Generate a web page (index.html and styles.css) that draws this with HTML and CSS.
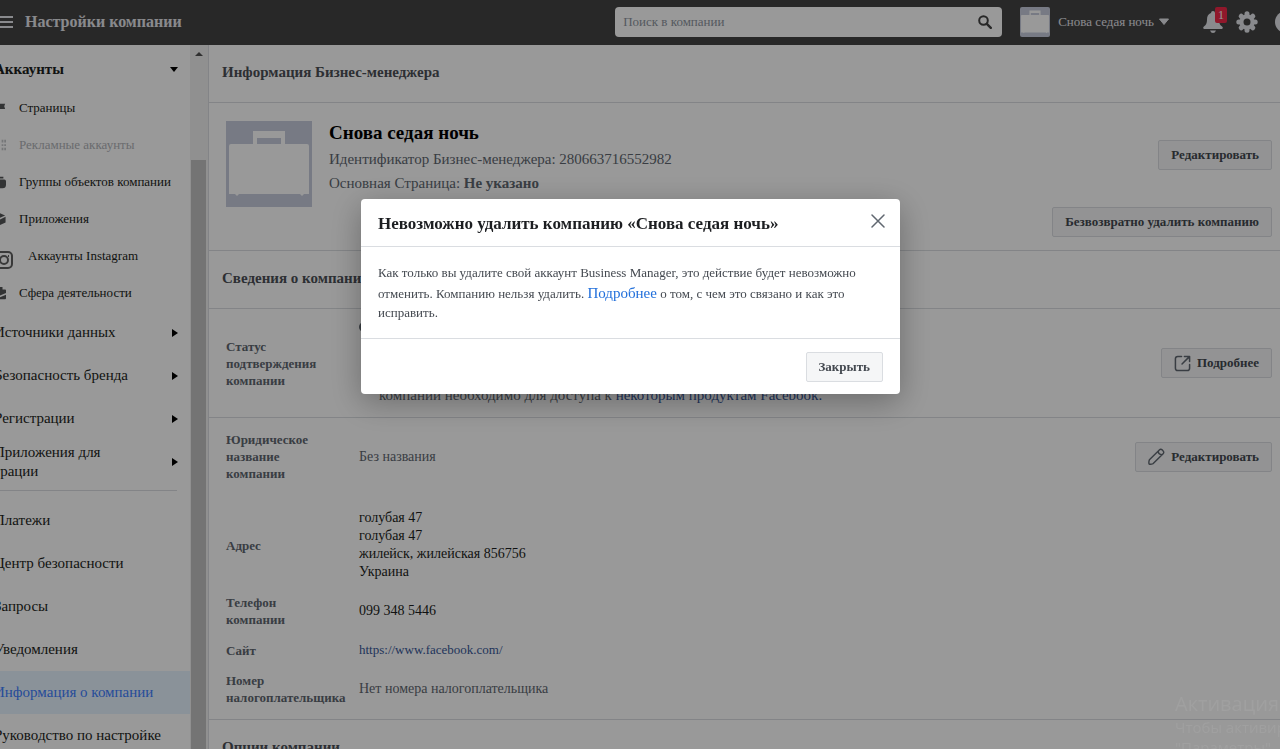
FILE: index.html
```html
<!DOCTYPE html>
<html lang="ru">
<head>
  <meta charset="UTF-8">
  <title>Настройки компании</title>
  <link rel="stylesheet" href="styles.css">
</head>
<body>
  <svg class="defs" width="0" height="0" aria-hidden="true">
    <symbol id="case" viewBox="0 0 86 86">
      <rect width="86" height="86" fill="#c6ccdc"/>
      <path d="M27 10h32v13h22q2 0 2 2v48h-5l-2 2-2-2H13l-2 2-2-2H3V25q0-2 2-2h22zM31 17v6h24v-6z" fill="#fff" fill-rule="evenodd"/>
    </symbol>
  </svg>

  <header class="topbar">
    <button class="menu" aria-label="Меню"><span></span><span></span><span></span></button>
    <h1>Настройки компании</h1>
    <form class="search">
      <input type="search" aria-label="Поиск в компании" placeholder="Поиск в компании">
      <button type="button" aria-label="Найти">
        <svg width="14" height="14" viewBox="0 0 14 14"><circle cx="5.5" cy="5.5" r="4.3" fill="none" stroke="#444" stroke-width="2"/><path d="M8.8 8.8l4 4" stroke="#444" stroke-width="2.4" stroke-linecap="round"/></svg>
      </button>
    </form>
    <button class="account">
      <svg class="avatar-small" width="30" height="30"><use href="#case"/></svg>
      Снова седая ночь
      <svg width="12" height="8" viewBox="0 0 12 8"><path d="M1.500 1h9L6 6.500z" fill="#e4e6eb" stroke="#e4e6eb" stroke-linejoin="round"/></svg>
    </button>
    <button class="bell" aria-label="Уведомления">
      <svg width="20" height="22" viewBox="0 0 20 22" fill="#e4e6eb"><path d="M10 0a2 2 0 0 1 2 2c3 1 4 3.500 4 6.500 0 4 1 5.500 3.300 7.200.9.800.5 2.300-.8 2.300H1.500c-1.300 0-1.700-1.500-.8-2.300C3 14 4 12.500 4 8.500 4 5.500 5 3 8 2a2 2 0 0 1 2-2z"/><path d="M7 19.500h6q-1 2.500-3 2.500t-3-2.500z"/></svg>
      <span class="badge">1</span>
    </button>
    <button class="gear" aria-label="Настройки">
      <svg width="22" height="22" viewBox="0 0 22 22"><g stroke="#e4e6eb" stroke-width="5" stroke-linecap="round"><path d="M11 2.800v16.400M2.800 11h16.400M5.200 5.200l11.600 11.600M16.800 5.200L5.200 16.800"/></g><circle cx="11" cy="11" r="7.500" fill="#e4e6eb"/><circle cx="11" cy="11" r="3.500" fill="#444"/></svg>
    </button>
    <button class="help" aria-label="Справка"></button>
  </header>

  <div class="layout">
    <aside class="sidebar">
      <nav class="nav">
        <a class="group open" href="#">Аккаунты <i class="arrow-down"></i></a>
        <a class="sub" href="#"><svg class="icon" viewBox="0 0 16 16"><path d="M1 1h2v14H1zM3 3h12l-1 3 1 3H3z"/></svg>Страницы</a>
        <a class="sub disabled" href="#"><svg class="icon" viewBox="0 0 16 16"><path d="M0 2h9v12H0zM11 2h2v3h-2zM14 2h2v3h-2zM11 7h2v2h-2zM14 7h2v2h-2zM11 11h2v3h-2zM14 11h2v3h-2z"/></svg>Рекламные аккаунты</a>
        <a class="sub" href="#"><svg class="icon" viewBox="0 0 16 16"><path d="M3 2h10v2H3zM0 7q0-2 2-2h12q2 0 2 2v4q0 4-4 4H4q-4 0-4-4z"/></svg>Группы объектов компании</a>
        <a class="sub" href="#"><svg class="icon" viewBox="0 0 16 16"><path d="M8 1l7 3-7 3-7-3zM1 5.500l6 3V15l-6-3zM15.500 5.500V12L9 15V8.500z"/></svg>Приложения</a>
        <a class="sub insta" href="#"><svg class="icon-insta" viewBox="0 0 18 18" fill="none" stroke="#606060" stroke-width="2"><rect x="1" y="1" width="16" height="16" rx="4"/><circle cx="9" cy="9" r="4"/><path d="M13 5h1"/></svg><span>Аккаунты Instagram</span></a>
        <a class="sub" href="#"><svg class="icon" viewBox="0 0 16 16"><path d="M5 1h7v3h3q1 0 1 1v3l-7 3-9-3V5q0-1 1-1h4zM0 10l9 3 7-3v4q0 1-1 1H1q-1 0-1-1z"/></svg>Сфера деятельности</a>
        <a class="group" href="#">Источники данных <i class="arrow-right"></i></a>
        <a class="group" href="#">Безопасность бренда <i class="arrow-right"></i></a>
        <a class="group" href="#">Регистрации <i class="arrow-right"></i></a>
        <a class="group" href="#"><span>Приложения для<br>грации</span> <i class="arrow-right"></i></a>
        <hr>
        <a class="group" href="#">Платежи</a>
        <a class="group" href="#">Центр безопасности</a>
        <a class="group" href="#">Запросы</a>
        <a class="group" href="#">Уведомления</a>
        <a class="group active" href="#">Информация о компании</a>
        <a class="group" href="#">Руководство по настройке</a>
      </nav>
      <div class="scrollbar"><i class="scroll-up"></i><div class="thumb"></div></div>
    </aside>

    <main class="content">
      <h2 class="section-title">Информация Бизнес-менеджера</h2>
      <section class="profile">
        <svg class="avatar" width="86" height="86"><use href="#case"/></svg>
        <div class="profile-info">
          <h3>Снова седая ночь</h3>
          <p>Идентификатор Бизнес-менеджера: 280663716552982</p>
          <p>Основная Страница: <b>Не указано</b></p>
        </div>
        <div class="profile-actions">
          <button class="btn">Редактировать</button>
          <button class="btn">Безвозвратно удалить компанию</button>
        </div>
      </section>

      <h2 class="section-title">Сведения о компании</h2>
      <section class="row status">
        <h4>Статус подтверждения компании</h4>
        <div class="status-text">
          <i class="dot"></i>
          <p>компании необходимо для доступа к <a href="#">некоторым продуктам Facebook.</a></p>
        </div>
        <button class="btn"><svg width="17" height="17" viewBox="0 0 18 18" fill="none" stroke="#606770" stroke-width="1.600" stroke-linecap="round" stroke-linejoin="round"><path d="M8 1.500H4Q1.500 1.500 1.500 4v10q0 2.500 2.500 2.500h10q2.500 0 2.500-2.500v-4M11 1.500h5.500V7M16 2L8.500 9.500"/></svg>Подробнее</button>
      </section>
      <section class="details">
        <div class="row legal">
          <h4>Юридическое название компании</h4>
          <p class="muted">Без названия</p>
          <button class="btn"><svg width="17" height="17" viewBox="0 0 18 18" fill="none" stroke="#606770" stroke-width="1.500" stroke-linejoin="round"><path d="M1.500 12.500L12 2q1.500-1.500 3.200.2l.6.600q1.700 1.700.2 3.200L5.500 16.500Q3 17.500 1.200 17q-.7-2 .3-4.500zM11 3.200q-.5 3.300 3.800 4"/></svg>Редактировать</button>
        </div>
        <div class="row">
          <h4>Адрес</h4>
          <p>голубая 47<br>голубая 47<br>жилейск, жилейская 856756<br>Украина</p>
        </div>
        <div class="row">
          <h4>Телефон компании</h4>
          <p>099 348 5446</p>
        </div>
        <div class="row">
          <h4>Сайт</h4>
          <p><a class="site" href="#">https://www.facebook.com/</a></p>
        </div>
        <div class="row">
          <h4>Номер налогоплательщика</h4>
          <p class="muted">Нет номера налогоплательщика</p>
        </div>
      </section>
      <h2 class="section-title">Опции компании</h2>
    </main>
  </div>

  <div class="overlay">
    <div class="modal" role="dialog" aria-labelledby="modal-title">
      <div class="modal-header">
        <h2 id="modal-title">Невозможно удалить компанию «Снова седая ночь»</h2>
        <button class="close" aria-label="Закрыть окно">
          <svg width="14" height="14" viewBox="0 0 14 14"><path d="M1 1l12 12M13 1L1 13" stroke="#606770" stroke-width="1.500" stroke-linecap="round"/></svg>
        </button>
      </div>
      <p class="modal-body">Как только вы удалите свой аккаунт Business Manager, это действие будет невозможно отменить. Компанию нельзя удалить. <a href="#">Подробнее</a> о том, с чем это связано и как это исправить.</p>
      <div class="modal-footer">
        <button class="btn">Закрыть</button>
      </div>
    </div>
  </div>

  <div class="watermark">
    <p class="watermark-title">Активация Windows</p>
    <p>Чтобы активировать Windows,</p>
    <p>"Параметры".</p>
  </div>
</body>
</html>
```
FILE: styles.css
```css
* {
  box-sizing: border-box;
}
body {
  margin: 0;
  height: 100vh;
  overflow: hidden;
  display: flex;
  flex-direction: column;
  font-family: "Liberation Serif", "Times New Roman", serif;
  font-size: 14px;
  line-height: 18px;
  color: #1c1e21;
  background: #fff;
}
h1, h2, h3, h4, p {
  margin: 0;
}
a {
  color: #385898;
  text-decoration: none;
}
button {
  font-family: inherit;
  border: 0;
  padding: 0;
  background: none;
}
.defs {
  position: absolute;
}

/* top bar */
.topbar {
  flex: none;
  display: flex;
  align-items: center;
  height: 45px;
  padding-bottom: 2px;
  background: #444;
  overflow: hidden;
}
.menu {
  display: flex;
  flex-direction: column;
  gap: 3px;
  width: 13px;
  margin-right: 12px;
}
.menu span {
  height: 2px;
  background: #e4e6eb;
}
.topbar h1 {
  font-size: 16px;
  line-height: 20px;
  color: #e4e6eb;
}
.search {
  display: flex;
  align-items: center;
  width: 387px;
  height: 30px;
  margin-left: auto;
  padding: 0 10px 0 8px;
  background: #fff;
  border-radius: 4px;
}
.search input {
  flex: 1;
  border: 0;
  padding: 0;
  background: none;
  font-family: inherit;
  font-size: 13px;
}
.search input::placeholder {
  color: #8d949e;
}
.search button {
  display: flex;
}
.account {
  display: flex;
  align-items: center;
  gap: 4px;
  margin-left: 18px;
  font-size: 13px;
  color: #e4e6eb;
}
.avatar-small {
  margin-right: 4px;
  border-radius: 2px;
}
.bell {
  position: relative;
  display: flex;
  margin-left: 33px;
}
.badge {
  position: absolute;
  top: -4px;
  right: -4px;
  width: 12px;
  border-radius: 2px;
  background: #f02849;
  color: #fff;
  font-size: 12px;
  line-height: 16px;
}
.gear {
  display: flex;
  margin-left: 13px;
}
.help {
  flex: none;
  width: 22px;
  height: 22px;
  margin: 0 -17px 0 17px;
  border-radius: 50%;
  background: #e4e6eb;
}

/* layout */
.layout {
  flex: 1;
  display: flex;
  min-height: 0;
}
.sidebar {
  flex: none;
  display: flex;
  width: 209px;
  border-right: 1px solid #dadde1;
}
.nav {
  flex: 1;
  margin-left: -16px;
  padding-top: 1px;
  overflow: hidden;
}
.nav a {
  display: flex;
  align-items: center;
  color: #1c1e21;
}
.nav .group {
  height: 43px;
  padding: 0 12px 0 10px;
  justify-content: space-between;
  font-size: 15px;
  line-height: 19px;
}
.nav .open {
  padding-top: 4px;
  font-weight: bold;
}
.nav .sub {
  height: 37px;
  padding-left: 8px;
  gap: 13px;
  font-size: 13px;
}
.nav .disabled {
  color: #b0b3b8;
}
.icon {
  width: 14px;
  height: 14px;
  fill: currentColor;
  opacity: .75;
}
.nav .insta {
  gap: 15px;
}
.icon-insta {
  width: 18px;
  height: 18px;
  margin: 8px 0 0 3px;
}
.nav .active {
  color: #4080ff;
  background: #e7f3ff;
}
.nav hr {
  margin: 7px 13px 8px 16px;
  border: 0;
  border-top: 1px solid #dadde1;
}
.arrow-down {
  border: 4px solid transparent;
  border-top: 5px solid #000;
  border-bottom: 0;
}
.arrow-right {
  border: 4px solid transparent;
  border-left: 6px solid #000;
  border-right: 0;
}
.scrollbar {
  display: flex;
  flex-direction: column;
  width: 18px;
  padding: 7px 2px 0 1px;
  background: #f1f1f1;
}
.scroll-up {
  align-self: center;
  border: 4px solid transparent;
  border-bottom-color: #505050;
  border-top: 0;
}
.thumb {
  flex: 1;
  margin-top: 104px;
  background: #c1c1c1;
}

/* main column */
.content {
  flex: 1;
  min-width: 0;
  overflow: hidden;
}
.section-title {
  padding: 17px 13px 20px;
  border-bottom: 1px solid #dadde1;
  font-size: 15px;
  line-height: 20px;
  color: #4b4f56;
}
.profile {
  display: flex;
  gap: 17px;
  padding: 18px 8px 13px 17px;
  border-bottom: 1px solid #dadde1;
}
.profile-info h3 {
  font-size: 19px;
  line-height: 24px;
  color: #000;
}
.profile-info p {
  margin-top: 4px;
  font-size: 15px;
  line-height: 20px;
  color: #606770;
}
.profile-actions {
  display: flex;
  flex-direction: column;
  align-items: flex-end;
  gap: 37px;
  margin: 19px 0 0 auto;
}
.btn {
  display: flex;
  align-items: center;
  gap: 6px;
  height: 30px;
  padding: 0 12px;
  border: 1px solid #dadde1;
  border-radius: 2px;
  background: #f5f6f7;
  font-size: 13px;
  font-weight: bold;
  color: #444950;
}
.row {
  display: flex;
  align-items: center;
  padding: 0 8px 0 17px;
}
.row h4 {
  width: 133px;
  padding-right: 30px;
  font-size: 13px;
  line-height: 17px;
  color: #606770;
}
.row .btn {
  margin-left: auto;
}
.row .muted {
  color: #606770;
}
.status {
  height: 109px;
  border-bottom: 1px solid #dadde1;
}
.status-text {
  display: flex;
  flex-direction: column;
  gap: 54px;
  font-size: 15px;
  color: #606770;
}
.status-text p {
  padding-left: 20px;
}
.dot {
  width: 10px;
  height: 10px;
  border-radius: 50%;
  background: #606770;
}
.site {
  font-size: 13px;
}
.details {
  display: flex;
  flex-direction: column;
  gap: 13px;
  padding: 13px 0;
  border-bottom: 1px solid #dadde1;
}
.legal {
  margin-bottom: 14px;
}

/* dialog */
.overlay {
  position: fixed;
  inset: 0;
  display: flex;
  justify-content: center;
  align-items: flex-start;
  padding: 199px 19px 0 0;
  background: rgba(0, 0, 0, .4);
}
.modal {
  width: 539px;
  border-radius: 4px;
  background: #fff;
  box-shadow: 0 8px 32px rgba(0, 0, 0, .3);
}
.modal-header {
  display: flex;
  justify-content: space-between;
  padding: 15px 15px 12px 17px;
  border-bottom: 1px solid #dadde1;
}
.modal-header h2 {
  font-size: 17px;
  line-height: 20px;
}
.close {
  display: flex;
}
.modal-body {
  padding: 17px 17px 16px;
  font-size: 13px;
  line-height: 18px;
  color: #444950;
}
.modal-body a {
  font-size: 15px;
  line-height: 22px;
  color: #216fdb;
}
.modal-footer {
  display: flex;
  justify-content: flex-end;
  padding: 13px 17px 12px;
  border-top: 1px solid #dadde1;
}

/* system watermark */
.watermark {
  position: fixed;
  right: 0;
  bottom: 0;
  width: 105px;
  height: 58px;
  overflow: hidden;
  white-space: nowrap;
  font-family: "Open Sans", sans-serif;
  font-size: 15px;
  line-height: 20px;
  color: rgba(255, 255, 255, .07);
}
.watermark-title {
  font-size: 20px;
  line-height: 26px;
}
```
